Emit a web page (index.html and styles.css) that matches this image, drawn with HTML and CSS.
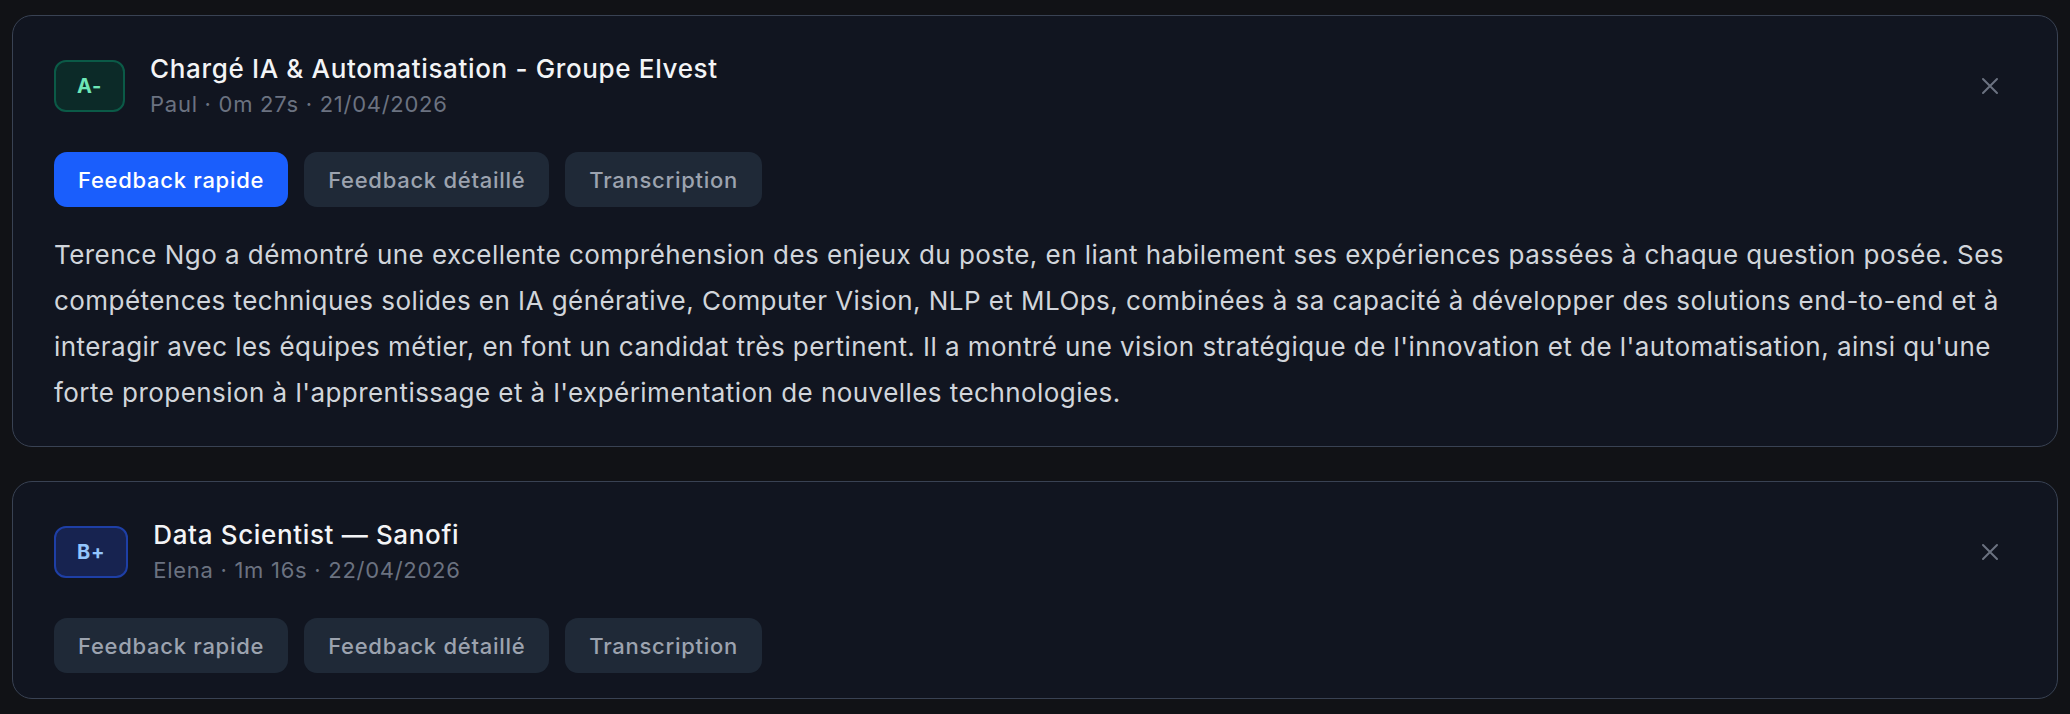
FILE: index.html
```html
<!DOCTYPE html>
<html>

<head>
    <link rel="stylesheet" href="styles.css">
</head>

<body>
    <div class="list">
        <div class="card">
            <div class="card-head">
                <div class="grade grade-a">A-</div>
                <div class="info">
                    <div class="title">Chargé IA &amp; Automatisation - Groupe Elvest</div>
                    <div class="meta">Paul · 0m 27s · 21/04/2026</div>
                </div>
                <button class="close" aria-label="Fermer">
                    <svg width="18" height="18" viewBox="0 0 18 18" fill="none" stroke="currentColor" stroke-width="2" stroke-linecap="round">
                        <path d="M2 2L16 16M16 2L2 16" />
                    </svg>
                </button>
            </div>
            <div class="tabs">
                <button class="tab active">Feedback rapide</button>
                <button class="tab">Feedback détaillé</button>
                <button class="tab">Transcription</button>
            </div>
            <p class="feedback">Terence Ngo a démontré une excellente compréhension des enjeux du poste, en liant habilement ses expériences passées à chaque question posée. Ses<br>
                compétences techniques solides en IA générative, Computer Vision, NLP et MLOps, combinées à sa capacité à développer des solutions end-to-end et à<br>
                interagir avec les équipes métier, en font un candidat très pertinent. Il a montré une vision stratégique de l'innovation et de l'automatisation, ainsi qu'une<br>
                forte propension à l'apprentissage et à l'expérimentation de nouvelles technologies.</p>
        </div>

        <div class="card">
            <div class="card-head">
                <div class="grade grade-b">B+</div>
                <div class="info">
                    <div class="title">Data Scientist — Sanofi</div>
                    <div class="meta">Elena · 1m 16s · 22/04/2026</div>
                </div>
                <button class="close" aria-label="Fermer">
                    <svg width="18" height="18" viewBox="0 0 18 18" fill="none" stroke="currentColor" stroke-width="2" stroke-linecap="round">
                        <path d="M2 2L16 16M16 2L2 16" />
                    </svg>
                </button>
            </div>
            <div class="tabs">
                <button class="tab">Feedback rapide</button>
                <button class="tab">Feedback détaillé</button>
                <button class="tab">Transcription</button>
            </div>
        </div>
    </div>
</body>

</html>
```

FILE: styles.css
```css
body {
    margin: 0;
    padding: 15px 12px;
    background: #111216;
    font-family: "Inter", "Noto Sans", sans-serif;
    letter-spacing: 0.045em;
    color: #f3f4f6;
}

.list {
    display: flex;
    flex-direction: column;
    gap: 34px;
}

.card {
    background: #111520;
    border: 1px solid #394253;
    border-radius: 20px;
    padding: 37px 41px 25px;
}

.card-head {
    display: flex;
    align-items: center;
    gap: 25px;
}

.grade {
    box-sizing: border-box;
    height: 52px;
    padding: 0 21px;
    display: flex;
    align-items: center;
    justify-content: center;
    border-radius: 12px;
    border: 2px solid;
    font-size: 20px;
    font-weight: 700;
}

.grade-a {
    background: #0c2a28;
    border-color: #0b5a47;
    color: #6ee7b7;
}

.grade-b {
    background: #172350;
    border-color: #1e3fa6;
    color: #93c5fd;
}

.info {
    flex: 1;
    display: flex;
    flex-direction: column;
    gap: 5px;
}

.title {
    font-size: 26px;
    line-height: 32px;
    font-weight: 500;
    letter-spacing: 0.025em;
    color: #f3f4f6;
}

.meta {
    font-size: 22px;
    line-height: 28px;
    color: #6b7280;
}

.close {
    background: none;
    border: none;
    color: #6b7280;
    padding: 9px;
    margin-right: 8px;
    display: flex;
    cursor: pointer;
}

.tabs {
    display: flex;
    gap: 16px;
    margin-top: 34px;
}

.tab {
    height: 55px;
    padding: 0 24px;
    border: none;
    border-radius: 13px;
    background: #1f2937;
    color: #9ca3af;
    font-family: inherit;
    letter-spacing: inherit;
    font-size: 22px;
    font-weight: 500;
    cursor: pointer;
}

.tab.active {
    background: #1a5efc;
    color: #ffffff;
}

.feedback {
    margin: 25px 0 5px;
    font-size: 26px;
    line-height: 46px;
    letter-spacing: 0.45px;
    color: #d1d5db;
}
```
